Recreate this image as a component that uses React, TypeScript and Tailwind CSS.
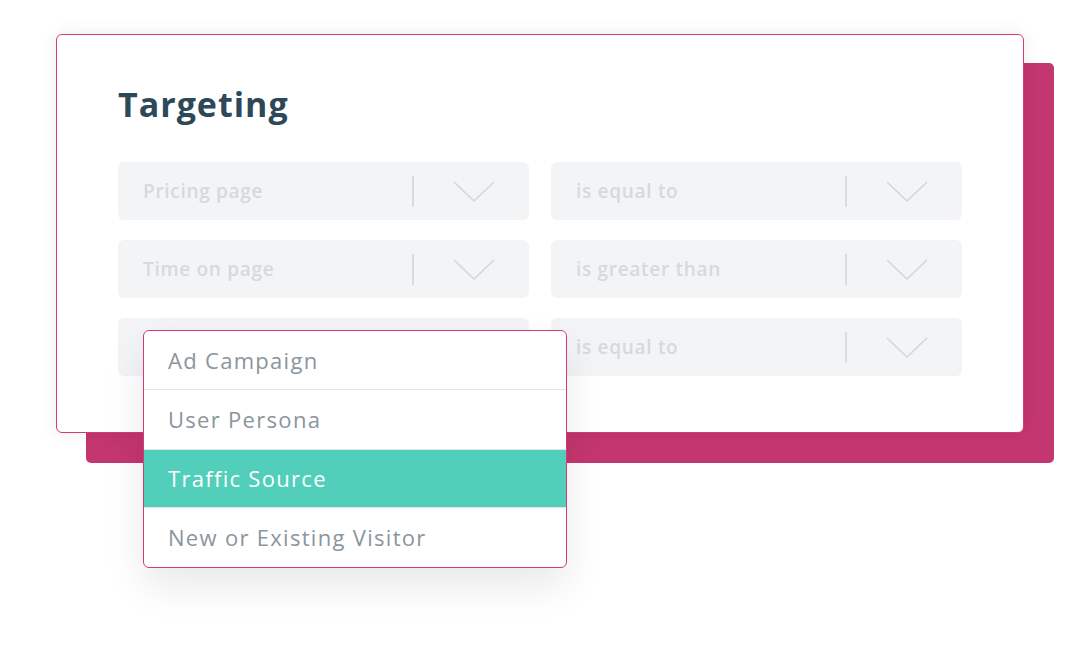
import React from "react";

const Chevron = () => (
  <svg width="42" height="22" viewBox="0 0 42 22" fill="none">
    <path d="M1 1 L21 20 L41 1" stroke="#d3d6da" strokeWidth="1.6" />
  </svg>
);

const Field = ({ label }: { label: string }) => (
  <div className="flex h-[58px] items-center rounded-[6px] bg-[#f3f4f6]">
    <span className="flex-1 pl-[25px] pt-[1px] text-[19px] font-semibold text-[#d6d9dd] tracking-[0.7px]">{label}</span>
    <div className="h-[31px] w-[2px] bg-[#d8dbdf]" />
    <div className="ml-[39px] mr-[34px] flex items-center pt-[2px]">
      <Chevron />
    </div>
  </div>
);

const items = ["Ad Campaign", "User Persona", "Traffic Source", "New or Existing Visitor"];
const itemClasses = [
  "flex h-[58px] items-center pl-[24px] text-[22px] tracking-[1.3px] text-[#8a959c]",
  "flex h-[60px] items-center pl-[24px] text-[22px] tracking-[1.3px] text-[#8a959c] border-t border-[#e3e6e8]",
  "flex h-[58px] items-center bg-[#51cfbb] pl-[24px] text-[22px] tracking-[1.3px] text-white border-t border-[#e3e6e8]",
  "flex h-[60px] items-center pl-[24px] text-[22px] tracking-[1.3px] text-[#8a959c] border-t border-[#e3e6e8]",
];

export default function App() {
  return (
    <div
      className="relative h-[648px] w-[1080px] overflow-hidden bg-white"
      style={{ fontFamily: "'Open Sans', 'Noto Sans', sans-serif" }}
    >
      <div className="relative ml-[56px] mt-[34px] w-[968px]">
        <div className="absolute left-[30px] top-[29px] h-[400px] w-[968px] rounded-[5px] bg-[#c4366f]" />
        <div className="relative h-[399px] rounded-[6px] border-[1.5px] border-[#d33a78] bg-white px-[61px] pt-[46px] shadow-[0_0_18px_rgba(0,0,0,0.08)]">
          <h1 className="text-[34px] font-bold leading-[46px] tracking-[1px] text-[#2d4858]">Targeting</h1>
          <div className="mt-[35px] grid grid-cols-2 gap-x-[22px] gap-y-[20px]">
            <Field label="Pricing page" />
            <Field label="is equal to" />
            <Field label="Time on page" />
            <Field label="is greater than" />
            <div className="h-[58px] rounded-[6px] bg-[#f3f4f6]" />
            <Field label="is equal to" />
          </div>
        </div>
        <div className="absolute left-[87px] top-[296px] w-[424px] overflow-hidden rounded-[6px] border-[1.5px] border-[#d33a78] bg-white shadow-[0_18px_40px_rgba(0,0,0,0.09)]">
          {items.map((it, i) => (
            <div key={it} className={itemClasses[i]}>
              {it}
            </div>
          ))}
        </div>
      </div>
    </div>
  );
}
